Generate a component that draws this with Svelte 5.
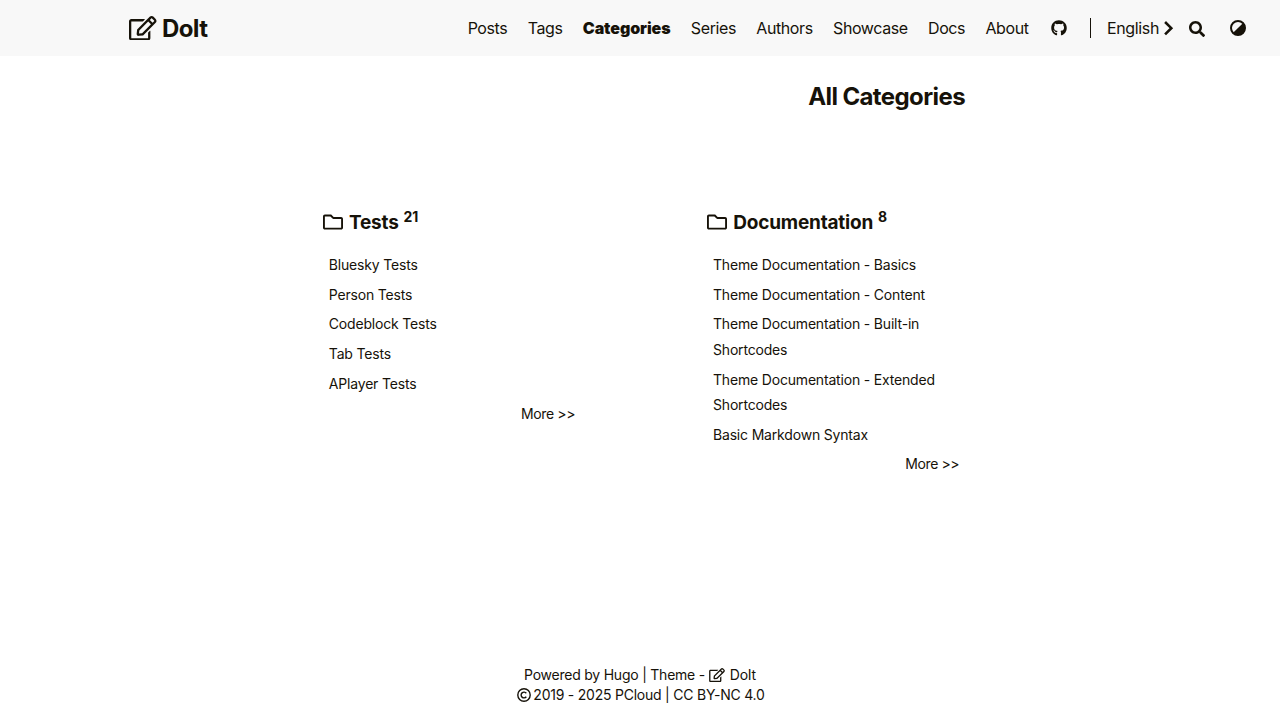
<script>
  const edit = "M402.3 344.9l32-32c5-5 13.7-1.5 13.7 5.7V464c0 26.5-21.5 48-48 48H48c-26.5 0-48-21.5-48-48V112c0-26.5 21.5-48 48-48h273.5c7.1 0 10.7 8.6 5.7 13.7l-32 32c-1.5 1.5-3.5 2.3-5.7 2.3H48v352h352V350.5c0-2.1.8-4.1 2.3-5.6zm156.6-201.8L296.3 405.7l-90.4 10c-26.2 2.9-48.5-19.2-45.6-45.6l10-90.4L432.9 17.1c22.9-22.9 59.9-22.9 82.7 0l43.2 43.2c22.9 22.9 22.9 60 .1 82.8zM460.1 174L402 115.9 216.2 301.8l-7.3 65.3 65.3-7.3L460.1 174zm64.8-79.7l-43.2-43.2c-4.1-4.1-10.8-4.1-14.8 0L436 82l58.1 58.1 30.9-30.9c4-4.2 4-10.8-.1-14.9z";
  const folder = "M464 128H272l-54.63-54.63c-6-6-14.14-9.37-22.63-9.37H48C21.49 64 0 85.49 0 112v288c0 26.51 21.49 48 48 48h416c26.51 0 48-21.49 48-48V176c0-26.51-21.49-48-48-48zm0 272H48V112h140.12l54.63 54.63c6 6 14.14 9.37 22.63 9.37H464v224z";
  const menu = ["Posts", "Tags", "Categories", "Series", "Authors", "Showcase", "Docs", "About"];
  const categories = [
    { name: "Tests", count: 21, posts: ["Bluesky Tests", "Person Tests", "Codeblock Tests", "Tab Tests", "APlayer Tests"] },
    { name: "Documentation", count: 8, posts: ["Theme Documentation - Basics", "Theme Documentation - Content", "Theme Documentation - Built-in Shortcodes", "Theme Documentation - Extended Shortcodes", "Basic Markdown Syntax"] }
  ];
</script>

<div class="page">
  <header>
    <a class="brand" href="#home"><svg viewBox="0 0 576 512"><path d={edit} /></svg><span>DoIt</span></a>
    <nav>
      {#each menu as item}
        <a href="#{item}" class:active={item === "Categories"}>{item}</a>
      {/each}
      <a href="#github" class="github" aria-label="GitHub"><svg viewBox="0 0 496 512"><path d="M244.8 8C106.1 8 0 113.3 0 252c0 110.9 69.8 205.8 169.5 239.2 12.8 2.3 17.3-5.6 17.3-12.1 0-6.2-.3-40.4-.3-61.4 0 0-70 15-84.7-29.8 0 0-11.4-29.1-27.8-36.6 0 0-22.9-15.7 1.6-15.4 0 0 24.9 2 38.6 25.8 21.9 38.6 58.6 27.5 72.9 20.9 2.3-16 8.8-27.1 16-33.7-55.9-6.2-112.3-14.3-112.3-110.5 0-27.5 7.6-41.3 23.6-58.9-2.6-6.5-11.1-33.3 2.6-67.9 20.9-6.5 69 27 69 27 20-5.6 41.5-8.5 62.8-8.5s42.8 2.9 62.8 8.5c0 0 48.1-33.6 69-27 13.7 34.7 5.2 61.4 2.6 67.9 16 17.7 25.8 31.5 25.8 58.9 0 96.5-58.9 104.2-114.8 110.5 9.2 7.9 17 22.9 17 46.4 0 33.7-.3 75.4-.3 83.6 0 6.5 4.6 14.4 17.3 12.1C428.2 457.8 496 362.9 496 252 496 113.3 383.5 8 244.8 8z" /></svg></a>
    </nav>
    <div class="tools">
      <span class="rule"></span>
      <span class="lang">English</span>
      <svg class="chevron" viewBox="0 0 10 16"><path d="M2 2.9L7.3 8.2L2 13.5" /></svg>
      <svg class="search" viewBox="0 0 512 512"><path d="M505 442.7L405.3 343c-4.5-4.5-10.6-7-17-7H372c27.6-35.3 44-79.7 44-128C416 93.1 322.9 0 208 0S0 93.1 0 208s93.1 208 208 208c48.3 0 92.7-16.4 128-44v16.3c0 6.4 2.5 12.5 7 17l99.7 99.7c9.4 9.4 24.6 9.4 33.9 0l28.3-28.3c9.4-9.4 9.4-24.6.1-34zM208 336c-70.7 0-128-57.2-128-128 0-70.7 57.2-128 128-128 70.7 0 128 57.2 128 128 0 70.7-57.2 128-128 128z" /></svg>
      <svg class="theme" viewBox="0 0 16 16"><circle cx="8" cy="8" r="7" /><path d="M13.1 2.9A7.2 7.2 0 0 1 2.9 13.1Z" /></svg>
    </div>
  </header>
  <main>
    <h2>All Categories</h2>
    <div class="grid">
      {#each categories as cat}
        <section class="card">
          <h3><svg viewBox="0 0 512 512"><path d={folder} /></svg><span>{cat.name}</span><sup>{cat.count}</sup></h3>
          {#each cat.posts as post}
            <article><a href="#post">{post}</a></article>
          {/each}
          <div class="more"><a href="#more">More &gt;&gt;</a></div>
        </section>
      {/each}
    </div>
  </main>
  <footer>
    <div class="powered"><span>Powered by Hugo | Theme -</span><svg class="pen" viewBox="0 0 576 512"><path d={edit} /></svg><span>DoIt</span></div>
    <div class="rights"><svg class="copy" viewBox="0 0 14 14"><circle cx="7" cy="7" r="6.2" /><path d="M9.3 5.2A2.9 2.9 0 1 0 9.3 8.8" /></svg><span>2019 - 2025 PCloud | CC BY-NC 4.0</span></div>
  </footer>
</div>

<style>
  :global(body) { margin: 0; background: #fff; }
  * { box-sizing: border-box; }
  .page { width: 1280px; height: 720px; display: flex; flex-direction: column; overflow: hidden; font-family: Inter, "Liberation Sans", sans-serif; font-size: 14px; letter-spacing: -0.18px; color: #161209; }
  a { color: inherit; text-decoration: none; }
  svg { fill: currentColor; flex: none; display: block; }
  header { height: 56px; flex: none; background: #f8f8f8; display: flex; align-items: center; padding: 0 34px 0 129px; }
  .brand { display: flex; align-items: center; gap: 5.5px; font-size: 24px; font-weight: 700; letter-spacing: -0.6px; }
  .brand svg { width: 27.5px; height: 24.5px; }
  nav { display: flex; align-items: center; margin-left: auto; gap: 20.3px; font-size: 16px; letter-spacing: -0.4px; }
  .active { font-weight: 900; letter-spacing: -0.08px; }
  .github svg { width: 16px; height: 16px; margin-left: 2px; }
  .tools { display: flex; align-items: center; font-size: 16px; letter-spacing: -0.35px; }
  .rule { width: 1px; height: 20px; background: #161209; margin: 0 16px 0 23px; }
  .chevron { width: 10px; height: 16px; margin-left: 5px; fill: none; stroke: currentColor; stroke-width: 2.6; stroke-linecap: square; }
  .search { width: 16px; height: 16px; margin: 1px 0 0 15px; }
  .theme { width: 16px; height: 16px; margin-left: 25px; }
  .theme circle { fill: none; stroke: currentColor; stroke-width: 2; }
  main { flex: 1; width: 642px; margin-left: 323px; }
  h2 { margin: 24px 0 0; text-align: right; font-size: 24px; line-height: 34px; font-weight: 700; letter-spacing: -0.6px; }
  .grid { display: grid; grid-template-columns: 257.5px 257.5px; column-gap: 126.7px; margin-top: 93px; }
  h3 { display: flex; align-items: center; height: 30px; margin: 0 0 15px; font-size: 19px; font-weight: 700; letter-spacing: -0.2px; }
  h3 svg { width: 20px; height: 20px; margin-right: 6px; }
  sup { font-size: 14px; line-height: 14px; margin: -11px 0 0 4.8px; letter-spacing: 0.1px; }
  article { padding: 0 5.8px; margin-bottom: 4.3px; line-height: 25.4px; }
  .more { text-align: right; padding-right: 5.5px; line-height: 25.2px; letter-spacing: -0.4px; }
  footer { height: 55px; flex: none; line-height: 20px; letter-spacing: -0.23px; }
  footer > div { display: flex; justify-content: center; align-items: center; height: 20px; }
  .pen { width: 16px; height: 14px; margin: -1px 4.7px 0 4.2px; }
  .rights { padding-left: 2px; }
  .copy { width: 14px; height: 14px; margin: -1px 2px 0 0; fill: none; stroke: currentColor; stroke-width: 1.4; }
</style>
